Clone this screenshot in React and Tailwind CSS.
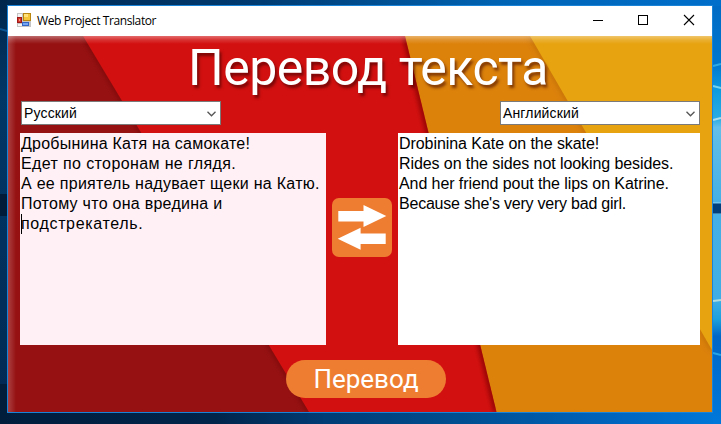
const SOURCE_LINES = [
  { text: 'Дробынина Катя на самокате!', cls: 'tracking-[0.23px]' },
  { text: 'Едет по сторонам не глядя.', cls: 'tracking-[0.38px]' },
  { text: 'А ее приятель надувает щеки на Катю.', cls: 'tracking-[0.28px]' },
  { text: 'Потому что она вредина и', cls: 'tracking-[0.27px]' },
  { text: 'подстрекатель.', cls: 'tracking-[0.65px]' },
];

const RESULT_LINES = [
  { text: 'Drobinina Kate on the skate!', cls: 'tracking-[-0.06px]' },
  { text: 'Rides on the sides not looking besides.', cls: 'tracking-[-0.08px]' },
  { text: 'And her friend pout the lips on Katrine.', cls: 'tracking-[-0.08px]' },
  { text: "Because she's very very bad girl.", cls: 'tracking-[-0.22px]' },
];

function Desktop() {
  return (
    <svg className="absolute inset-0" width="721" height="424" aria-hidden="true">
      <defs>
        <linearGradient id="top" x1="0" x2="1">
          <stop offset="0" stopColor="#00284f" />
          <stop offset="0.35" stopColor="#003a70" />
          <stop offset="0.7" stopColor="#0064b4" />
          <stop offset="1" stopColor="#006fcb" />
        </linearGradient>
        <linearGradient id="bottom" x1="0" x2="1">
          <stop offset="0" stopColor="#001d3c" />
          <stop offset="0.3" stopColor="#00254b" />
          <stop offset="0.45" stopColor="#003c75" />
          <stop offset="0.65" stopColor="#004f92" />
          <stop offset="0.85" stopColor="#0064bd" />
          <stop offset="1" stopColor="#0078da" />
        </linearGradient>
        <linearGradient id="left" x1="0" x2="0" y1="0" y2="1">
          <stop offset="0" stopColor="#00264c" />
          <stop offset="0.25" stopColor="#003766" />
          <stop offset="1" stopColor="#002a55" />
        </linearGradient>
        <linearGradient id="right" x1="0" x2="0" y1="0" y2="1">
          <stop offset="0" stopColor="#006bc4" />
          <stop offset="0.14" stopColor="#0077cf" />
          <stop offset="0.2" stopColor="#0d9bdf" />
          <stop offset="0.27" stopColor="#2aace3" />
          <stop offset="0.29" stopColor="#62bfe9" />
          <stop offset="0.47" stopColor="#45afe5" />
          <stop offset="0.7" stopColor="#40aee4" />
          <stop offset="0.75" stopColor="#1ba0de" />
          <stop offset="0.79" stopColor="#0067c6" />
          <stop offset="1" stopColor="#0078da" />
        </linearGradient>
      </defs>
      <rect width="721" height="424" fill="url(#top)" />
      <rect y="412" width="721" height="12" fill="url(#bottom)" />
      <rect width="7" height="386" fill="url(#left)" />
      <rect y="384" width="7" height="40" fill="#001d3b" />
      <rect y="194" width="7" height="22" fill="#001b39" />
      <path d="M0 29 L7 31" stroke="#0b5594" strokeWidth="2" />
      <rect x="713" y="6" width="8" height="418" fill="url(#right)" />
      <rect x="713" y="202" width="8" height="12" fill="#6cc3ed" />
      <rect x="713" y="203.500" width="8" height="10" fill="#003f7c" />
      <path d="M713 66 L721 64" stroke="#2caae6" strokeWidth="2" />
      <path d="M713 86 L721 88" stroke="#74d2ef" strokeWidth="2" />
      <path d="M713 120 L721 118" stroke="#a9dced" strokeWidth="2" />
      <path d="M713 301 L721 300" stroke="#acdcdf" strokeWidth="2" />
      <path d="M713 353 L721 355" stroke="#25a5e7" strokeWidth="2" />
    </svg>
  );
}

function Backdrop() {
  return (
    <svg className="absolute inset-0" width="704" height="376" aria-hidden="true">
      <defs>
        <filter id="soft" x="-20%" y="-20%" width="140%" height="140%">
          <feGaussianBlur stdDeviation="2.5" />
        </filter>
        <linearGradient id="glowTop" x1="0" x2="0" y1="0" y2="1">
          <stop offset="0" stopColor="#fff" stopOpacity="0.38" />
          <stop offset="0.5" stopColor="#fff" stopOpacity="0.14" />
          <stop offset="1" stopColor="#fff" stopOpacity="0" />
        </linearGradient>
        <linearGradient id="glowLeft" x1="0" x2="1">
          <stop offset="0" stopColor="#fff" stopOpacity="0.2" />
          <stop offset="1" stopColor="#fff" stopOpacity="0" />
        </linearGradient>
        <clipPath id="darkArea"><path d="M0 0H75L301 376H0Z" /></clipPath>
        <clipPath id="redArea"><path d="M0 0H397L488.500 376H0Z" /></clipPath>
        <clipPath id="orangeArea"><path d="M0 0H522L704 314V376H0Z" /></clipPath>
      </defs>
      <rect width="704" height="376" fill="#e7a310" />
      <g clipPath="url(#orangeArea)">
        <rect width="704" height="376" fill="#dc820b" />
        <path d="M522 0L704 314" stroke="#8a4a00" strokeOpacity="0.4" strokeWidth="3" filter="url(#soft)" />
      </g>
      <g clipPath="url(#redArea)">
        <rect width="704" height="376" fill="#d31010" />
        <path d="M397 0L488.500 376" stroke="#800000" strokeOpacity="0.9" strokeWidth="5" filter="url(#soft)" />
      </g>
      <g clipPath="url(#darkArea)">
        <rect width="704" height="376" fill="#961112" />
        <path d="M75 0L301 376" stroke="#600" strokeOpacity="0.5" strokeWidth="4" filter="url(#soft)" />
      </g>
      <rect width="704" height="8" fill="url(#glowTop)" />
      <rect width="8" height="376" fill="url(#glowLeft)" />
    </svg>
  );
}

function AppIcon() {
  return (
    <svg width="14" height="14" viewBox="0 0 14 14" className="-mt-[2px]" aria-hidden="true" shapeRendering="crispEdges">
      <rect width="14" height="14" fill="#c4c4c4" />
      <rect x="1" y="1" width="4" height="3" fill="#f5f5f5" />
      <rect x="1" y="11" width="4" height="2" fill="#f5f5f5" />
      <rect x="0" y="4" width="5" height="6" fill="#9f1717" />
      <rect x="1" y="5" width="3" height="4" fill="#d63a2c" />
      <rect x="2" y="6" width="1" height="2" fill="#f39a84" />
      <rect x="6" y="0" width="8" height="8" fill="#b98710" />
      <rect x="7" y="1" width="6" height="6" fill="#f5c63a" />
      <rect x="7" y="1" width="4" height="3" fill="#ffe27c" />
      <rect x="5" y="9" width="7" height="4" fill="#3565c4" />
      <rect x="6" y="10" width="5" height="2" fill="#74a5f2" />
    </svg>
  );
}

function TitleBar() {
  return (
    <header className="flex h-[30px] items-center bg-white pl-[9px]">
      <AppIcon />
      <span className="ml-[6px] whitespace-nowrap font-['Open_Sans','Noto_Sans',sans-serif] text-[12px] tracking-[-0.4px] text-black">
        Web Project Translator
      </span>
      <svg className="ml-auto" width="138" height="30" viewBox="0 0 138 30" fill="none" stroke="#000" aria-hidden="true">
        <path d="M19 14.500H29" />
        <rect x="64.500" y="9.500" width="9" height="9" />
        <path d="M110 9L120 19M120 9L110 19" strokeWidth="1.100" />
      </svg>
    </header>
  );
}

function LanguageSelect({ label }) {
  return (
    <button className="flex h-6 w-[200px] items-center justify-between border border-[#7a7a7a] bg-white pl-[2px] pr-1 font-['Liberation_Sans',Arial,sans-serif] text-[14px] tracking-[0.15px] text-black">
      <span className="leading-[22px]">{label}</span>
      <svg width="9" height="6" viewBox="0 0 9 6" fill="none" stroke="#555" strokeWidth="1.300" className="mt-[2px]" aria-hidden="true">
        <path d="M0.500 0.800L4.500 4.800L8.500 0.800" />
      </svg>
    </button>
  );
}

function TextPane({ lines, className, caretLine }) {
  return (
    <div className={`h-[212px] whitespace-nowrap pl-px pt-px font-['Liberation_Sans',Arial,sans-serif] text-[16px] leading-[20px] text-black ${className}`}>
      {lines.map((line, i) => (
        <p key={line.text} className={i === caretLine ? 'shadow-[inset_1px_0_0_#000]' : ''}>
          <span className={line.cls}>{line.text}</span>
        </p>
      ))}
    </div>
  );
}

function SwapButton() {
  return (
    <button className="mt-[65px] h-[59px] w-[60px] rounded-[7px] bg-[#ee7d32]">
      <svg width="60" height="59" viewBox="0 0 60 59" fill="#fff" aria-hidden="true">
        <path d="M6.300 13H31.500V7L54.300 18L31.500 29V23.500H6.300Z" />
        <path d="M53.700 35.500H28.600V29.700L5.700 40.700L28.600 51.700V46H53.700Z" />
      </svg>
    </button>
  );
}

export default function App() {
  return (
    <div className="relative h-[424px] w-[721px] overflow-hidden pl-[7px] pt-[5px]">
      <Desktop />
      <section className="relative h-[408px] w-[706px] border border-[#1883d7]">
        <TitleBar />
        <main className="relative flex h-[376px] flex-col overflow-hidden">
          <Backdrop />
          <h1 className="relative h-[65px] whitespace-nowrap pl-[180px] pt-[2px] font-[Roboto,sans-serif] text-[50px] leading-[60px] tracking-[-0.5px] text-white [text-shadow:2px_3px_3px_rgba(60,0,0,0.6)]">
            Перевод текста
          </h1>
          <div className="relative flex justify-between pl-[13px] pr-[12px]">
            <LanguageSelect label="Русский" />
            <LanguageSelect label="Английский" />
          </div>
          <div className="relative mt-2 flex items-start justify-between pl-3 pr-[12px]">
            <TextPane lines={SOURCE_LINES} caretLine={4} className="w-[306px] bg-[#fff0f5]" />
            <SwapButton />
            <TextPane lines={RESULT_LINES} className="w-[302px] bg-white" />
          </div>
          <button className="relative ml-[278px] mt-[15px] flex h-[38px] w-40 items-center justify-center rounded-full bg-[#ee7d32] pb-px font-[Roboto,sans-serif] text-[26px] leading-none text-white">
            Перевод
          </button>
        </main>
      </section>
    </div>
  );
}
